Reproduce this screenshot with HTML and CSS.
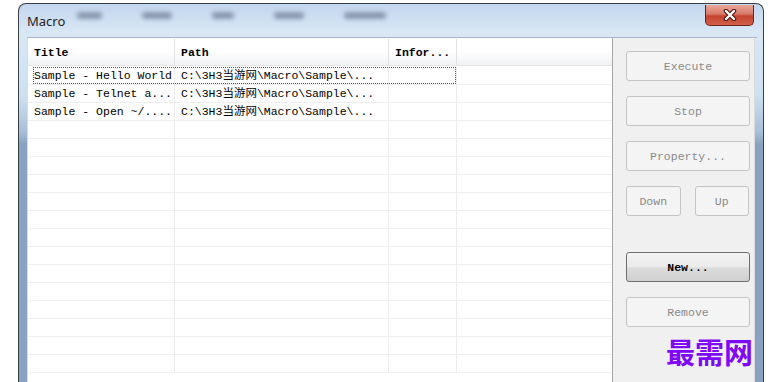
FILE: index.html
```html
<!DOCTYPE html>
<html lang="en">
<head>
    <meta charset="UTF-8">
    <title>Macro</title>
    <link rel="stylesheet" href="styles.css">
</head>
<body>
    <div class="window">
        <div class="titlebar">
            <span class="title">Macro</span>
            <div class="menu-blur">
                <span class="blob w1"></span>
                <span class="blob w2"></span>
                <span class="blob w3"></span>
                <span class="blob w2"></span>
                <span class="blob w4"></span>
            </div>
            <div class="close">
                <svg width="16" height="12" viewBox="0 0 16 12">
                    <path d="M4 2 L12 10 M12 2 L4 10" stroke="#4a1510" stroke-width="4.5" stroke-linecap="round"/>
                    <path d="M4 2 L12 10 M12 2 L4 10" stroke="#ffffff" stroke-width="2.4" stroke-linecap="round"/>
                </svg>
            </div>
        </div>
        <div class="client">
            <div class="list">
                <div class="row head">
                    <div class="cell">Title</div>
                    <div class="cell">Path</div>
                    <div class="cell">Infor...</div>
                    <div class="cell"></div>
                </div>
                <div class="row focused">
                    <div class="cell">Sample - Hello World</div>
                    <div class="cell">C:\3H3当游网\Macro\Sample\...</div>
                    <div class="cell"></div>
                    <div class="cell"></div>
                </div>
                <div class="row">
                    <div class="cell">Sample - Telnet a...</div>
                    <div class="cell">C:\3H3当游网\Macro\Sample\...</div>
                    <div class="cell"></div>
                    <div class="cell"></div>
                </div>
                <div class="row">
                    <div class="cell">Sample - Open ~/....</div>
                    <div class="cell">C:\3H3当游网\Macro\Sample\...</div>
                    <div class="cell"></div>
                    <div class="cell"></div>
                </div>
                <div class="row"><div class="cell"></div><div class="cell"></div><div class="cell"></div><div class="cell"></div></div>
                <div class="row"><div class="cell"></div><div class="cell"></div><div class="cell"></div><div class="cell"></div></div>
                <div class="row"><div class="cell"></div><div class="cell"></div><div class="cell"></div><div class="cell"></div></div>
                <div class="row"><div class="cell"></div><div class="cell"></div><div class="cell"></div><div class="cell"></div></div>
                <div class="row"><div class="cell"></div><div class="cell"></div><div class="cell"></div><div class="cell"></div></div>
                <div class="row"><div class="cell"></div><div class="cell"></div><div class="cell"></div><div class="cell"></div></div>
                <div class="row"><div class="cell"></div><div class="cell"></div><div class="cell"></div><div class="cell"></div></div>
                <div class="row"><div class="cell"></div><div class="cell"></div><div class="cell"></div><div class="cell"></div></div>
                <div class="row"><div class="cell"></div><div class="cell"></div><div class="cell"></div><div class="cell"></div></div>
                <div class="row"><div class="cell"></div><div class="cell"></div><div class="cell"></div><div class="cell"></div></div>
                <div class="row"><div class="cell"></div><div class="cell"></div><div class="cell"></div><div class="cell"></div></div>
                <div class="row"><div class="cell"></div><div class="cell"></div><div class="cell"></div><div class="cell"></div></div>
                <div class="row"><div class="cell"></div><div class="cell"></div><div class="cell"></div><div class="cell"></div></div>
                <div class="row"><div class="cell"></div><div class="cell"></div><div class="cell"></div><div class="cell"></div></div>
            </div>
            <div class="panel">
                <button class="btn" disabled>Execute</button>
                <button class="btn" disabled>Stop</button>
                <button class="btn" disabled>Property...</button>
                <div class="btn-pair">
                    <button class="btn" disabled>Down</button>
                    <button class="btn" disabled>Up</button>
                </div>
                <button class="btn default">New...</button>
                <button class="btn" disabled>Remove</button>
            </div>
        </div>
    </div>
    <div class="watermark">最需网</div>
</body>
</html>
```

FILE: styles.css
```css
body {
    margin: 0;
    background-color: #ffffff;
    height: 382px;
    overflow: hidden;
    position: relative;
}

.window {
    margin: 3px 0 0 18px;
    width: 744px;
    height: 378px;
    border: 1px solid #3a3f47;
    border-bottom: none;
    border-radius: 8px 8px 0 0;
    background: linear-gradient(#c2d6ed 0, #d9e7f5 28px, #cfe0f1 90px, #a9bfd8 128px, #8aa2bf 140px, #8aa2bf 100%);
}

.titlebar {
    height: 33px;
    display: flex;
    align-items: center;
    padding-left: 8px;
}

.title {
    font-family: "Noto Sans", sans-serif;
    font-size: 13px;
    color: #1e1e1e;
}

.menu-blur {
    display: flex;
    gap: 40px;
    margin-left: 12px;
    margin-top: -10px;
}

.blob {
    height: 7px;
    border-radius: 4px;
    background-color: #8898ad;
    filter: blur(2px);
}

.w1 { width: 25px; }
.w2 { width: 30px; }
.w3 { width: 22px; }
.w4 { width: 42px; }

.close {
    margin-left: auto;
    margin-right: 9px;
    align-self: flex-start;
    margin-top: 1px;
    width: 47px;
    height: 20px;
    border: 1px solid #6d2118;
    border-top: none;
    border-radius: 0 0 5px 5px;
    background: linear-gradient(#e9a89b 0, #d87a68 45%, #c5442f 55%, #d0604a 100%);
    display: flex;
    justify-content: center;
    align-items: center;
}

.client {
    display: flex;
    margin: 0 6px 0 8px;
    height: 345px;
    border-top: 1px solid #aab6c6;
}

.list {
    width: 584px;
    background-color: #ffffff;
    border-left: 1px solid #d6dde6;
    font-family: "Liberation Mono", "Noto Sans CJK SC", monospace;
    font-size: 11.5px;
    color: #000000;
}

.row {
    display: grid;
    grid-template-columns: 147px 214px 68px 1fr;
    height: 18px;
    border-bottom: 1px solid #eeeeee;
    box-sizing: border-box;
}

.row .cell {
    border-right: 1px solid #ececec;
    padding-left: 6px;
    line-height: 18px;
    white-space: nowrap;
    overflow: hidden;
}

.row .cell:last-child {
    border-right: none;
}

.row.head {
    height: 27px;
    margin-top: 1px;
    border-bottom: 1px solid #e4e4e4;
    background: linear-gradient(#ffffff 45%, #f1f2f4);
    font-weight: bold;
}

.row.head .cell {
    line-height: 27px;
    border-right-color: #e2e2e2;
}

.row.focused {
    position: relative;
    margin-top: 1px;
}

.row.focused::after {
    content: "";
    position: absolute;
    left: 5px;
    top: 0;
    width: 423px;
    height: 17px;
    border: 1px dotted #555555;
    box-sizing: border-box;
}

.panel {
    width: 143px;
    border-left: 1px solid #a6a6a6;
    border-right: 1px solid #dadada;
    background-color: #f0f0f0;
    padding: 13px 5px 0 13px;
    box-sizing: border-box;
    display: flex;
    flex-direction: column;
    gap: 15px;
}

.btn {
    width: 124px;
    height: 30px;
    border: 1px solid #c4c4c4;
    border-radius: 3px;
    background-color: #f4f4f4;
    color: #8a8a8a;
    font-family: "Liberation Mono", monospace;
    font-size: 11.5px;
    padding: 0;
}

.btn-pair {
    display: flex;
    gap: 14px;
    margin-bottom: 21px;
}

.btn-pair .btn {
    width: 55px;
}

.btn.default {
    border-color: #6f6f6f;
    background: linear-gradient(#f3f3f3 0, #ebebeb 50%, #dcdcdc 52%, #d0d0d0 100%);
    color: #000000;
    font-weight: bold;
}

.watermark {
    position: absolute;
    left: 666px;
    top: 330px;
    font-family: "Noto Sans CJK SC", sans-serif;
    font-weight: bold;
    font-size: 29px;
    color: #8008f8;
}
```
